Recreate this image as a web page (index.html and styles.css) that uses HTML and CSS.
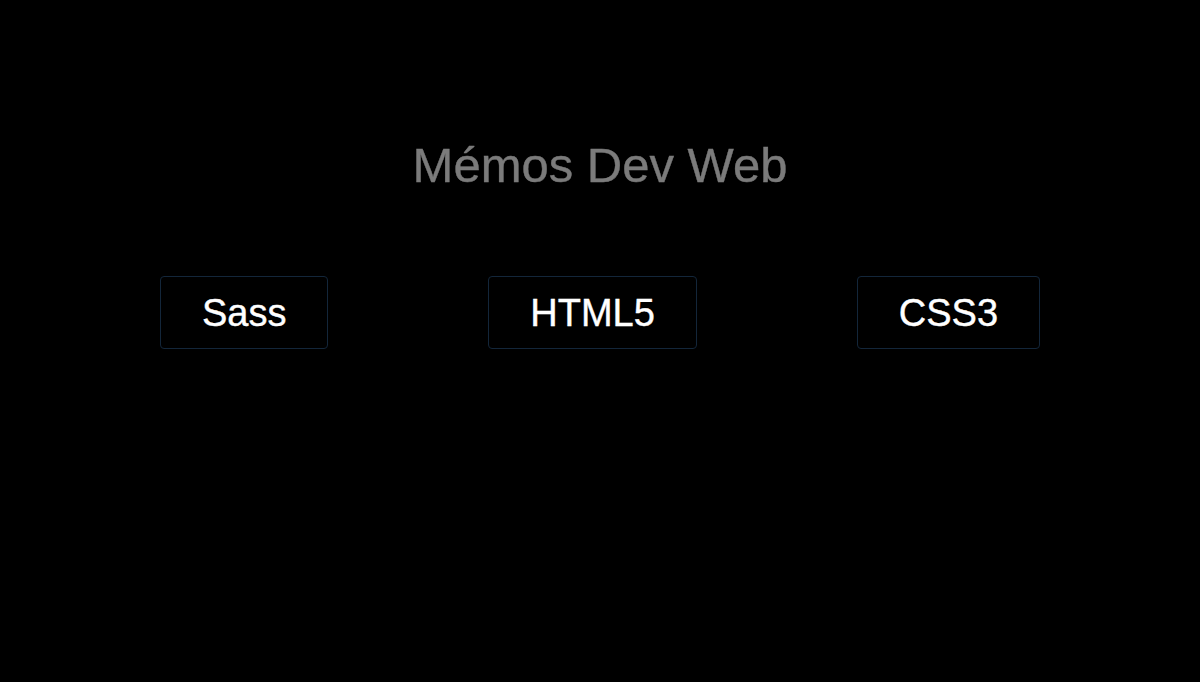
FILE: index.html
```html
<!DOCTYPE html>
<html lang="fr">
<head>
<meta charset="utf-8">
<title>Mémos Dev Web</title>
<link rel="stylesheet" href="styles.css">
</head>
<body>
<main class="page">
  <h1 class="title">Mémos Dev Web</h1>
  <nav class="memos">
    <a class="memo" href="#">Sass</a>
    <a class="memo" href="#">HTML5</a>
    <a class="memo" href="#">CSS3</a>
  </nav>
</main>
</body>
</html>
```
FILE: styles.css
```css
html, body {
  margin: 0;
  padding: 0;
  background: #000;
  height: 100%;
}

body {
  font-family: "Liberation Sans", Arial, sans-serif;
}

.page {
  display: flex;
  flex-direction: column;
  padding-top: 137px;
}

.title {
  margin: 0;
  text-align: center;
  font-size: 49px;
  line-height: 56px;
  font-weight: normal;
  color: #7b7b7b;
  -webkit-text-stroke: 0.4px #7b7b7b;
}

.memos {
  display: flex;
  justify-content: space-evenly;
  margin-top: 83px;
}

.memo {
  display: block;
  padding: 15px 41px 14px;
  border: 1px solid #13263a;
  border-radius: 4px;
  color: #fff;
  text-decoration: none;
  font-size: 38px;
  line-height: 42px;
  -webkit-text-stroke: 0.4px #fff;
}
```
